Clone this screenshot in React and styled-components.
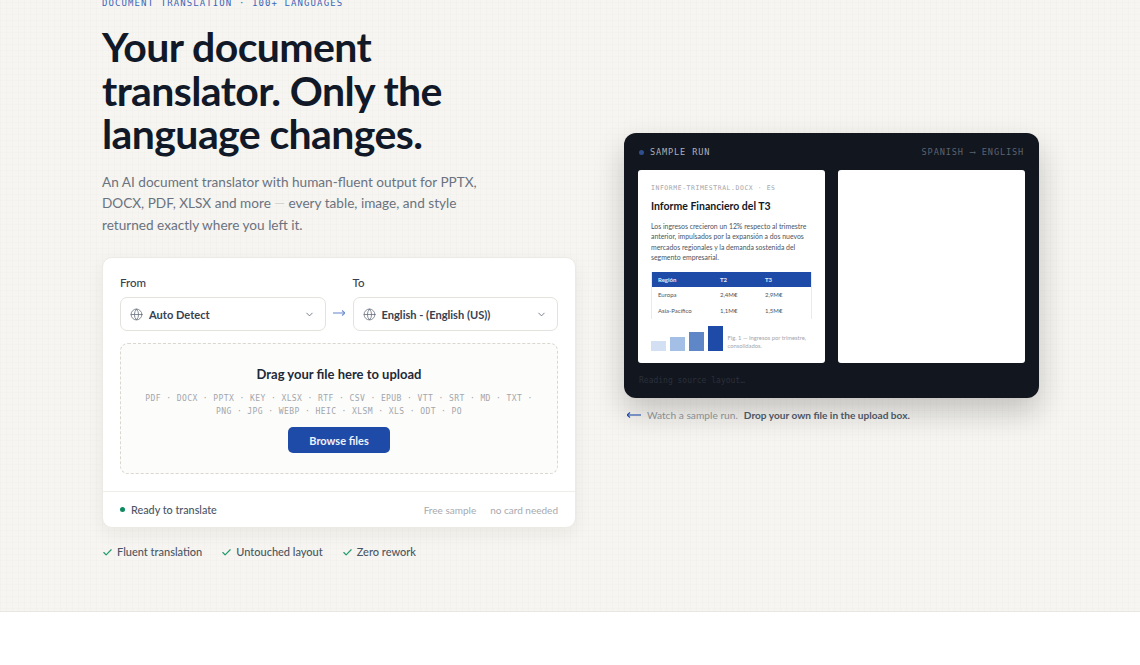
import React from "react";
import styled, { createGlobalStyle } from "styled-components";
import { Check, ChevronDown, Globe } from "lucide-react";

const sans = `"Lato", "Liberation Sans", sans-serif`;
const mono = `"DejaVu Sans Mono", "Liberation Mono", monospace`;
const blue = "#1e4aa8";
const ink = "#111827";

const GlobalStyle = createGlobalStyle`
  html, body {
    margin: 0;
    height: 665px;
    overflow: hidden;
    background: #fff;
    font-family: ${sans};
    color: ${ink};
  }
  * { box-sizing: border-box; }
`;

const Hero = styled.section`
  margin-top: -52px;
  padding: 48px 101px 51px 102px;
  display: grid;
  grid-template-columns: 474px 415px;
  gap: 48px;
  align-items: center;
  background-color: #f6f5f1;
  background-image:
    linear-gradient(rgba(120, 115, 100, 0.018) 1px, transparent 1px),
    linear-gradient(90deg, rgba(120, 115, 100, 0.018) 1px, transparent 1px);
  background-size: 6px 6px;
  border-bottom: 1px solid #e9e7e1;
`;

const Left = styled.div`
  display: flex;
  flex-direction: column;
`;

const Eyebrow = styled.div`
  font-family: ${mono};
  font-size: 9px;
  line-height: 14px;
  letter-spacing: 1.1px;
  color: #3a65b8;
  margin-bottom: 15px;
`;

const Title = styled.h1`
  margin: 0 0 16px;
  font-size: 41px;
  line-height: 43.5px;
  font-weight: 700;
  letter-spacing: -0.6px;
  color: ${ink};
`;

const Lead = styled.p`
  margin: 0 0 21px;
  width: 376px;
  font-size: 13.6px;
  line-height: 21.5px;
  color: #6b7280;

  span {
    color: #d5d4cf;
  }
`;

const Card = styled.div`
  background: #fff;
  border: 1px solid #eceae5;
  border-radius: 10px;
  box-shadow: 0 6px 18px rgba(30, 30, 20, 0.06);
`;

const CardBody = styled.div`
  padding: 17px 17px 17px;
  display: flex;
  flex-direction: column;
  gap: 12px;
`;

const LangRow = styled.div`
  display: grid;
  grid-template-columns: 1fr 27px 1fr;
  align-items: end;
`;

const Field = styled.div`
  display: flex;
  flex-direction: column;
  gap: 6px;
`;

const Label = styled.label`
  font-size: 11.5px;
  line-height: 16px;
  font-weight: 500;
  color: #374151;
`;

const Select = styled.div`
  height: 34px;
  padding: 0 10px 0 9px;
  display: flex;
  align-items: center;
  gap: 6px;
  background: #fff;
  border: 1px solid #e4e2dc;
  border-radius: 7px;
  font-size: 11.1px;
  font-weight: 700;
  color: #374151;

  span {
    flex: 1;
  }

  svg {
    flex: none;
    color: #6b7280;
  }
`;

const SwapArrow = styled.div`
  height: 34px;
  display: flex;
  align-items: center;
  justify-content: center;
  color: #6f8fd0;
  padding-bottom: 2px;
`;

const Drop = styled.div`
  height: 131px;
  padding-top: 22px;
  display: flex;
  flex-direction: column;
  align-items: center;
  background: #fcfcfa;
  border: 1px dashed #d9d7d0;
  border-radius: 8px;
`;

const DropTitle = styled.div`
  font-size: 13px;
  line-height: 16px;
  font-weight: 700;
  color: #1f2937;
  margin-bottom: 10px;
`;

const Formats = styled.div`
  width: 400px;
  font-family: ${mono};
  font-size: 8px;
  line-height: 13px;
  letter-spacing: 0.42px;
  text-align: center;
  color: #a3a6ad;
  margin-bottom: 9px;
`;

const Browse = styled.button`
  width: 102px;
  height: 26px;
  border: 0;
  border-radius: 5px;
  background: ${blue};
  color: #eef2fb;
  font-family: ${sans};
  font-size: 11px;
  font-weight: 700;
`;

const CardFoot = styled.div`
  height: 36px;
  padding: 0 17px;
  display: flex;
  align-items: center;
  gap: 14px;
  border-top: 1px solid #f0eee9;
  font-size: 10px;
  color: #a6a9af;
`;

const Status = styled.div`
  flex: 1;
  display: flex;
  align-items: center;
  gap: 6px;
  font-size: 10.8px;
  font-weight: 500;
  color: #4b5563;

  i {
    width: 5px;
    height: 5px;
    border-radius: 50%;
    background: #0f8a5f;
  }
`;

const Perks = styled.ul`
  list-style: none;
  margin: 16px 0 0;
  padding: 0;
  display: flex;
  gap: 19px;
`;

const Perk = styled.li`
  display: flex;
  align-items: center;
  gap: 4px;
  font-size: 11px;
  line-height: 16px;
  font-weight: 500;
  color: #4b5563;

  svg {
    color: #1f9a6c;
  }
`;

const Right = styled.div`
  display: flex;
  flex-direction: column;
  padding-bottom: 1px;
`;

const Panel = styled.div`
  height: 265px;
  padding: 13px 14px 12px;
  display: flex;
  flex-direction: column;
  background: #12161f;
  border-radius: 12px;
  box-shadow: 0 14px 30px rgba(20, 20, 20, 0.22);
`;

const PanelHead = styled.div`
  flex: none;
  height: 12px;
  margin-bottom: 12px;
  padding: 0 1px;
  display: flex;
  align-items: center;
  justify-content: space-between;
  font-family: ${mono};
  font-size: 8.6px;
  letter-spacing: 0.85px;
  color: #5c6370;
`;

const PanelName = styled.div`
  display: flex;
  align-items: center;
  gap: 6px;
  color: #aab0ba;

  i {
    width: 5px;
    height: 5px;
    border-radius: 50%;
    background: #2f4f8f;
  }
`;

const Docs = styled.div`
  display: grid;
  grid-template-columns: 187px 187px;
  justify-content: space-between;
`;

const Doc = styled.div`
  height: 193px;
  padding: 14px 13px 0;
  overflow: hidden;
  background: #fff;
  border-radius: 3px;
`;

const DocTag = styled.div`
  font-family: ${mono};
  font-size: 6.4px;
  line-height: 9px;
  letter-spacing: 0.6px;
  color: #a3a6ad;
  margin-bottom: 7px;
`;

const DocTitle = styled.div`
  font-size: 10.5px;
  line-height: 12px;
  font-weight: 700;
  color: ${ink};
  margin-bottom: 9px;
`;

const DocText = styled.p`
  margin: 0 0 10px;
  font-size: 6.9px;
  line-height: 10.3px;
  color: #4b5563;
`;

const TableClip = styled.div`
  height: 47px;
  overflow: hidden;
  border: solid #eceae5;
  border-width: 0 1px;
`;

const TableRow = styled.div`
  height: ${(p) => (p.$head ? "15px" : "15.5px")};
  padding: 0 6px;
  display: grid;
  grid-template-columns: 62px 45px 1fr;
  align-items: center;
  font-size: 6px;
  font-weight: ${(p) => (p.$head ? 700 : 400)};
  color: ${(p) => (p.$head ? "#e6ecf8" : "#4b5563")};
  background: ${(p) => (p.$head ? blue : "transparent")};
`;

const ChartRow = styled.div`
  margin-top: 7px;
  display: flex;
  align-items: flex-end;
  gap: 3.5px;
`;

const Bar = styled.div`
  width: 15.5px;
  height: ${(p) => p.$h}px;
  background: ${(p) => p.$c};
`;

const ChartNote = styled.div`
  margin-left: 1px;
  padding-bottom: 1px;
  width: 85px;
  font-size: 5.8px;
  line-height: 8px;
  color: #a3a6ad;
`;

const PanelStatus = styled.div`
  margin-top: 13px;
  padding-left: 1px;
  font-family: ${mono};
  font-size: 8px;
  line-height: 10px;
  color: #2b303a;
`;

const Caption = styled.div`
  margin-top: 10px;
  display: flex;
  align-items: center;
  font-size: 10.2px;
  line-height: 14px;
  color: #8a8d92;

  svg {
    margin: 0 6px 0 3px;
    color: ${blue};
  }

  b {
    margin-left: 6px;
    font-size: 10.1px;
    font-weight: 700;
    color: #4b5563;
  }
`;

const LongArrow = ({ width = 12 }) => (
  <svg width={width} height="8" viewBox={`0 0 ${width} 8`} fill="none" stroke="currentColor" strokeWidth="1.1">
    <path d={`M0 4h${width}`} />
    <path d={`M${width - 3} 1.5L${width} 4L${width - 3} 6.5`} />
  </svg>
);

const BackArrow = () => (
  <svg width="14" height="8" viewBox="0 0 14 8" fill="none" stroke="currentColor" strokeWidth="1.1">
    <path d="M0 4h14" />
    <path d="M3 1.5L0 4L3 6.5" />
  </svg>
);

const LangSelect = ({ label, value }) => (
  <Field>
    <Label>{label}</Label>
    <Select>
      <Globe size={13} strokeWidth={1.5} />
      <span>{value}</span>
      <ChevronDown size={11} strokeWidth={2} />
    </Select>
  </Field>
);

const perks = ["Fluent translation", "Untouched layout", "Zero rework"];
const bars = [
  { h: 10, c: "#d3e0f3" },
  { h: 14.5, c: "#a4bfe6" },
  { h: 19, c: "#5f86c7" },
  { h: 25, c: blue },
];

export default function App() {
  return (
    <>
      <GlobalStyle />
      <Hero>
        <Left>
          <Eyebrow>DOCUMENT TRANSLATION · 100+ LANGUAGES</Eyebrow>
          <Title>
            Your document
            <br />
            translator. Only the
            <br />
            language changes.
          </Title>
          <Lead>
            An AI document translator with human-fluent output for PPTX, DOCX, PDF, XLSX and more <span>—</span> every
            table, image, and style returned exactly where you left it.
          </Lead>
          <Card>
            <CardBody>
              <LangRow>
                <LangSelect label="From" value="Auto Detect" />
                <SwapArrow>
                  <LongArrow />
                </SwapArrow>
                <LangSelect label="To" value="English - (English (US))" />
              </LangRow>
              <Drop>
                <DropTitle>Drag your file here to upload</DropTitle>
                <Formats>
                  PDF · DOCX · PPTX · KEY · XLSX · RTF · CSV · EPUB · VTT · SRT · MD · TXT · PNG · JPG · WEBP · HEIC ·
                  XLSM · XLS · ODT · PO
                </Formats>
                <Browse>Browse files</Browse>
              </Drop>
            </CardBody>
            <CardFoot>
              <Status>
                <i />
                Ready to translate
              </Status>
              <span>Free sample</span>
              <span>no card needed</span>
            </CardFoot>
          </Card>
          <Perks>
            {perks.map((p) => (
              <Perk key={p}>
                <Check size={11} strokeWidth={2.5} />
                {p}
              </Perk>
            ))}
          </Perks>
        </Left>
        <Right>
          <Panel>
            <PanelHead>
              <PanelName>
                <i />
                SAMPLE RUN
              </PanelName>
              <span>SPANISH ⟶ ENGLISH</span>
            </PanelHead>
            <Docs>
              <Doc>
                <DocTag>INFORME-TRIMESTRAL.DOCX · ES</DocTag>
                <DocTitle>Informe Financiero del T3</DocTitle>
                <DocText>
                  Los ingresos crecieron un 12% respecto al trimestre anterior, impulsados por la expansión a dos nuevos
                  mercados regionales y la demanda sostenida del segmento empresarial.
                </DocText>
                <TableClip>
                  <TableRow $head>
                    <span>Región</span>
                    <span>T2</span>
                    <span>T3</span>
                  </TableRow>
                  <TableRow>
                    <span>Europa</span>
                    <span>2,4M€</span>
                    <span>2,9M€</span>
                  </TableRow>
                  <TableRow>
                    <span>Asia-Pacífico</span>
                    <span>1,1M€</span>
                    <span>1,5M€</span>
                  </TableRow>
                </TableClip>
                <ChartRow>
                  {bars.map((b) => (
                    <Bar key={b.c} $h={b.h} $c={b.c} />
                  ))}
                  <ChartNote>Fig. 1 — Ingresos por trimestre, consolidados.</ChartNote>
                </ChartRow>
              </Doc>
              <Doc />
            </Docs>
            <PanelStatus>Reading source layout…</PanelStatus>
          </Panel>
          <Caption>
            <BackArrow />
            Watch a sample run.
            <b>Drop your own file in the upload box.</b>
          </Caption>
        </Right>
      </Hero>
    </>
  );
}
